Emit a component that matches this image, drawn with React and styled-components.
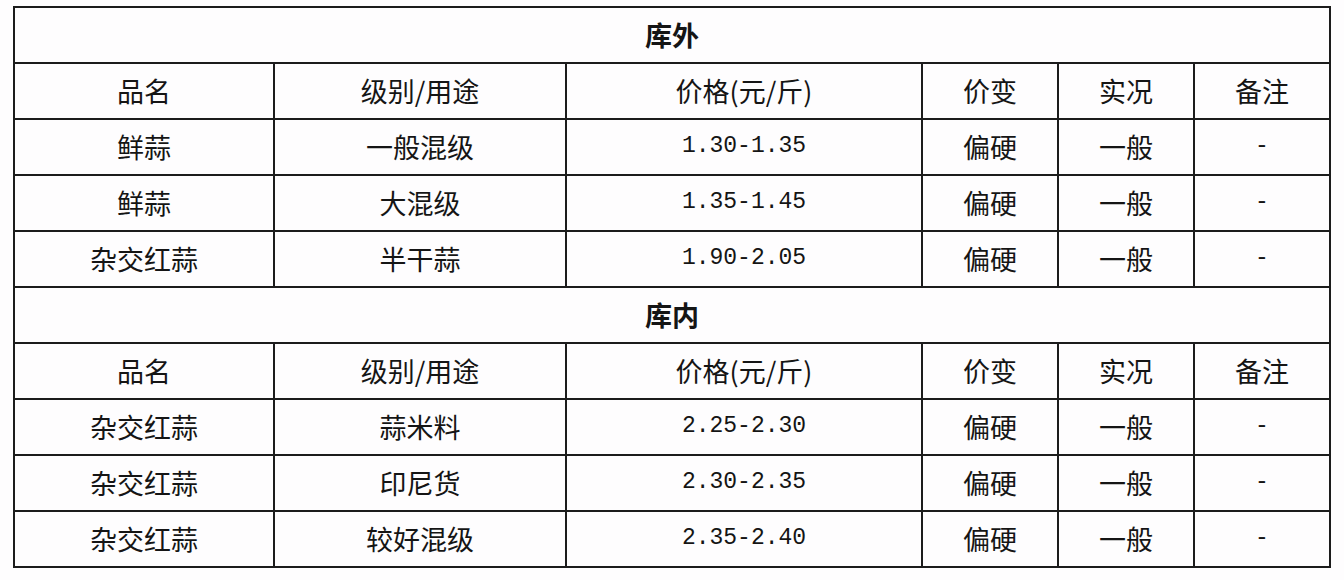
import React from "react";
import styled, { createGlobalStyle } from "styled-components";

const Global = createGlobalStyle`
  html, body { margin: 0; padding: 0; background: #fefdfe; }
  body { font-family: "Noto Sans CJK SC", "Noto Sans", sans-serif; color: #151515; }
`;

const Page = styled.div`
  padding: 6px 0 0 13px;
`;

const Table = styled.table`
  border-collapse: collapse;
  table-layout: fixed;
  width: 1316px;
`;

const Cell = styled.td`
  border: 2px solid #1c1c1c;
  height: 52px;
  padding: 0 0 2px;
  text-align: center;
  vertical-align: middle;
  font-size: ${(p) => (p.$mono ? "23px" : "27px")};
  line-height: 1;
  font-weight: ${(p) => (p.$bold ? 700 : 400)};
  font-family: ${(p) =>
    p.$mono
      ? `"Liberation Mono", "DejaVu Sans Mono", monospace`
      : `"Noto Sans CJK SC", "Noto Sans", sans-serif`};
`;

const widths = [260, 292, 356, 136, 136, 136];
const head = ["品名", "级别/用途", "价格(元/斤)", "价变", "实况", "备注"];

const sections = [
  {
    title: "库外",
    rows: [
      ["鲜蒜", "一般混级", "1.30-1.35"],
      ["鲜蒜", "大混级", "1.35-1.45"],
      ["杂交红蒜", "半干蒜", "1.90-2.05"],
    ],
  },
  {
    title: "库内",
    rows: [
      ["杂交红蒜", "蒜米料", "2.25-2.30"],
      ["杂交红蒜", "印尼货", "2.30-2.35"],
      ["杂交红蒜", "较好混级", "2.35-2.40"],
    ],
  },
];

export default function App() {
  return (
    <Page>
      <Global />
      <Table>
        <colgroup>
          {widths.map((w, i) => (
            <col key={i} style={{ width: w }} />
          ))}
        </colgroup>
        <tbody>
          {sections.map((s) => (
            <React.Fragment key={s.title}>
              <tr>
                <Cell colSpan={6} $bold>
                  {s.title}
                </Cell>
              </tr>
              <tr>
                {head.map((h) => (
                  <Cell key={h}>{h}</Cell>
                ))}
              </tr>
              {s.rows.map((r, i) => (
                <tr key={i}>
                  <Cell>{r[0]}</Cell>
                  <Cell>{r[1]}</Cell>
                  <Cell $mono>{r[2]}</Cell>
                  <Cell>偏硬</Cell>
                  <Cell>一般</Cell>
                  <Cell $mono>-</Cell>
                </tr>
              ))}
            </React.Fragment>
          ))}
        </tbody>
      </Table>
    </Page>
  );
}
